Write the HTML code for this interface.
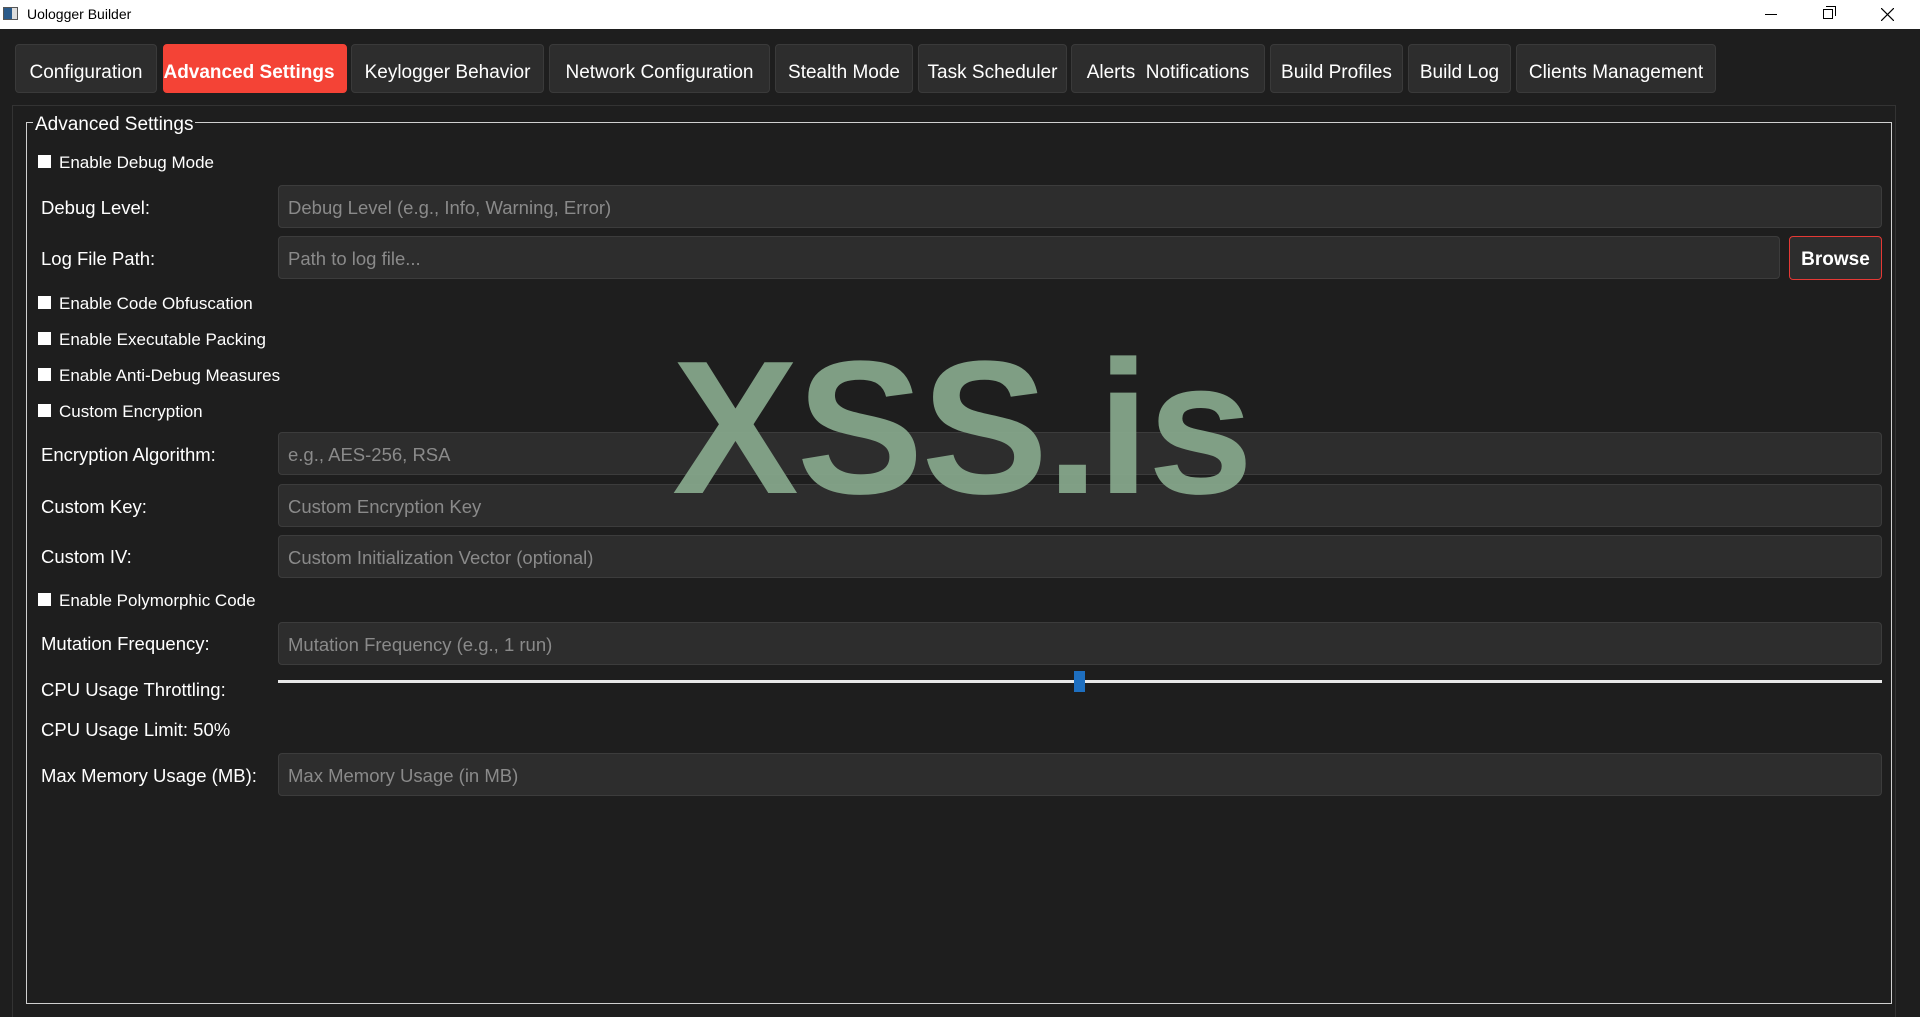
<!DOCTYPE html>
<html><head><meta charset="utf-8"><style>
*{margin:0;padding:0;box-sizing:border-box}
body{width:1920px;height:1017px;background:#1e1e1e;font-family:"Liberation Sans",sans-serif;position:relative;overflow:hidden;color:#fff}
.tb{position:absolute;left:0;top:0;width:1920px;height:29px;background:#fff;color:#000;font-size:14px}
.tab{position:absolute;top:44px;height:49px;background:#2d2d2d;border:1px solid #3a3a3a;border-radius:4px;font-size:19px;line-height:55px;text-align:center;color:#fff;white-space:nowrap;overflow:hidden}
.tab.a{background:#f44336;border-color:#f44336;font-weight:bold}
.pane{position:absolute;left:12px;top:105px;width:1884px;height:912px;border:1px solid #333;border-bottom:none}
.gb{position:absolute;left:26px;top:122px;width:1866px;height:882px;border:1px solid #d0d0d0}
.gt{position:absolute;left:33px;top:113px;background:#1e1e1e;padding:0 2px;font-size:19px;line-height:24px}
.lb{position:absolute;left:41px;font-size:18.5px;line-height:24px;transform:translateY(-11px)}
.cb{position:absolute;left:38px;font-size:17px;line-height:22px;transform:translateY(-11px);padding-left:21px}
.cb:before{content:"";position:absolute;left:0;top:3px;width:13px;height:13px;background:#fff}
.in{position:absolute;left:278px;width:1604px;height:43px;background:#2d2d2d;border:1px solid #3c3c3c;border-radius:4px;color:#8a8a8a;font-size:18.5px;line-height:43px;padding-left:9px}
.wm{position:absolute;left:672px;top:328px;font-size:190px;font-weight:bold;line-height:200px;color:rgba(135,168,140,0.93);letter-spacing:-2px;pointer-events:none}
</style></head><body>
<div class="tb">
<div style="position:absolute;left:3px;top:7px;width:15px;height:13px;border:1px solid #555;background:linear-gradient(90deg,#2a5a8a 60%,#ddd 60%)"></div>
<div style="position:absolute;left:27px;top:6px">Uologger Builder</div>
<div style="position:absolute;left:1765px;top:14px;width:12px;height:1px;background:#000"></div>
<div style="position:absolute;left:1823px;top:9px;width:10px;height:10px;border:1px solid #000"></div>
<div style="position:absolute;left:1826px;top:6px;width:10px;height:10px;border-top:1px solid #000;border-right:1px solid #000"></div>
<svg style="position:absolute;left:1881px;top:8px" width="13" height="13"><path d="M0 0L13 13M13 0L0 13" stroke="#000" stroke-width="1.2"/></svg>
</div>
<div class="tab" style="left:15px;width:142px">Configuration</div>
<div class="tab a" style="left:163px;width:184px;text-indent:-12px">Advanced Settings</div>
<div class="tab" style="left:351px;width:193px">Keylogger Behavior</div>
<div class="tab" style="left:549px;width:221px">Network Configuration</div>
<div class="tab" style="left:775px;width:138px">Stealth Mode</div>
<div class="tab" style="left:918px;width:149px">Task Scheduler</div>
<div class="tab" style="left:1071px;width:194px">Alerts &nbsp;Notifications</div>
<div class="tab" style="left:1270px;width:133px">Build Profiles</div>
<div class="tab" style="left:1408px;width:103px">Build Log</div>
<div class="tab" style="left:1516px;width:200px">Clients Management</div>
<div class="pane"></div>
<div class="gb"></div>
<div class="gt">Advanced Settings</div>

<div class="cb" style="top:163px">Enable Debug Mode</div>
<div class="lb" style="top:207px">Debug Level:</div>
<div class="in" style="top:185px">Debug Level (e.g., Info, Warning, Error)</div>
<div class="lb" style="top:258px">Log File Path:</div>
<div class="in" style="top:236px;width:1502px">Path to log file...</div>
<div style="position:absolute;left:1789px;top:236px;width:93px;height:44px;border:1px solid #e53935;border-radius:4px;background:#2d2d2d;font-weight:bold;font-size:19px;line-height:46px;text-align:center">Browse</div>
<div class="cb" style="top:304px">Enable Code Obfuscation</div>
<div class="cb" style="top:340px">Enable Executable Packing</div>
<div class="cb" style="top:376px">Enable Anti-Debug Measures</div>
<div class="cb" style="top:412px">Custom Encryption</div>
<div class="lb" style="top:454px">Encryption Algorithm:</div>
<div class="in" style="top:432px">e.g., AES-256, RSA</div>
<div class="lb" style="top:506px">Custom Key:</div>
<div class="in" style="top:484px">Custom Encryption Key</div>
<div class="lb" style="top:556px">Custom IV:</div>
<div class="in" style="top:535px">Custom Initialization Vector (optional)</div>
<div class="cb" style="top:601px">Enable Polymorphic Code</div>
<div class="lb" style="top:643px">Mutation Frequency:</div>
<div class="in" style="top:622px">Mutation Frequency (e.g., 1 run)</div>
<div class="lb" style="top:689px">CPU Usage Throttling:</div>
<div style="position:absolute;left:278px;top:680px;width:1604px;height:3px;background:#e8e8e8"></div>
<div style="position:absolute;left:1074px;top:671px;width:11px;height:21px;background:#1e6fc0"></div>
<div class="lb" style="top:729px">CPU Usage Limit: 50%</div>
<div class="lb" style="top:775px">Max Memory Usage (MB):</div>
<div class="in" style="top:753px">Max Memory Usage (in MB)</div>
<div class="wm">XSS.is</div>
</body></html>
